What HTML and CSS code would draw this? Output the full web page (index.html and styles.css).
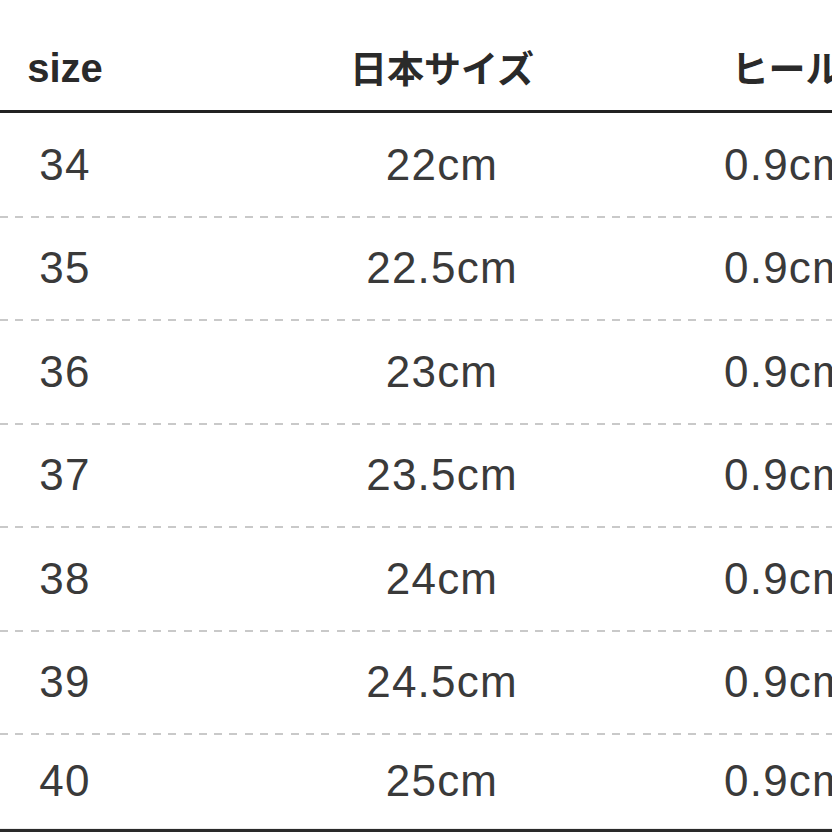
FILE: index.html
```html
<!DOCTYPE html>
<html lang="ja">
<head>
<meta charset="utf-8">
<title>サイズ表</title>
<link rel="stylesheet" href="styles.css">
</head>
<body>
<div class="size-table">
  <div class="row head">
    <div class="cell"><span class="latin">size</span></div>
    <div class="cell">日本サイズ</div>
    <div class="cell">ヒール</div>
  </div>
  <div class="row"><div class="cell">34</div><div class="cell">22cm</div><div class="cell">0.9cm</div></div>
  <div class="row"><div class="cell">35</div><div class="cell">22.5cm</div><div class="cell">0.9cm</div></div>
  <div class="row"><div class="cell">36</div><div class="cell">23cm</div><div class="cell">0.9cm</div></div>
  <div class="row"><div class="cell">37</div><div class="cell">23.5cm</div><div class="cell">0.9cm</div></div>
  <div class="row"><div class="cell">38</div><div class="cell">24cm</div><div class="cell">0.9cm</div></div>
  <div class="row"><div class="cell">39</div><div class="cell">24.5cm</div><div class="cell">0.9cm</div></div>
  <div class="row last"><div class="cell">40</div><div class="cell">25cm</div><div class="cell">0.9cm</div></div>
</div>
</body>
</html>
```
FILE: styles.css
```css
html, body {
  margin: 0;
  padding: 0;
  background: #ffffff;
  overflow: hidden;
}

body {
  width: 832px;
  height: 832px;
}

.size-table {
  display: flex;
  flex-direction: column;
  width: 832px;
}

.row {
  display: grid;
  grid-template-columns: 130px 624px 66px;
  align-items: center;
  box-sizing: border-box;
  height: 103.5px;
  padding-top: 1px;
  padding-bottom: 1px;
  position: relative;
  font-family: "Liberation Sans", "Noto Sans CJK JP", sans-serif;
  font-size: 44px;
  letter-spacing: 1.2px;
  color: #3a3a3a;
  line-height: 1;
}

.row::after {
  content: "";
  position: absolute;
  left: 0;
  right: 0;
  bottom: -1px;
  height: 2px;
  background: repeating-linear-gradient(90deg, #c9c9c9 0 8px, transparent 8px 15.3px);
}

.row.head {
  height: 113px;
  padding-top: 28px;
  padding-bottom: 3px;
  border-bottom: 3px solid #222222;
  font-family: "Noto Sans CJK JP", "Liberation Sans", sans-serif;
  font-weight: 700;
  font-size: 37px;
  letter-spacing: 0;
  color: #2a2a2a;
}

.row.head::after,
.row.last::after {
  display: none;
}

.row.head .latin {
  font-family: "Liberation Sans", sans-serif;
  font-size: 40px;
  letter-spacing: 0;
}

.row.last {
  height: 98px;
  padding-bottom: 2px;
  border-bottom: 3px solid #2a2a2a;
  box-shadow: 0 -5px 0 -4px #ececec inset;
}

.cell {
  display: flex;
  justify-content: center;
  white-space: nowrap;
}
```
